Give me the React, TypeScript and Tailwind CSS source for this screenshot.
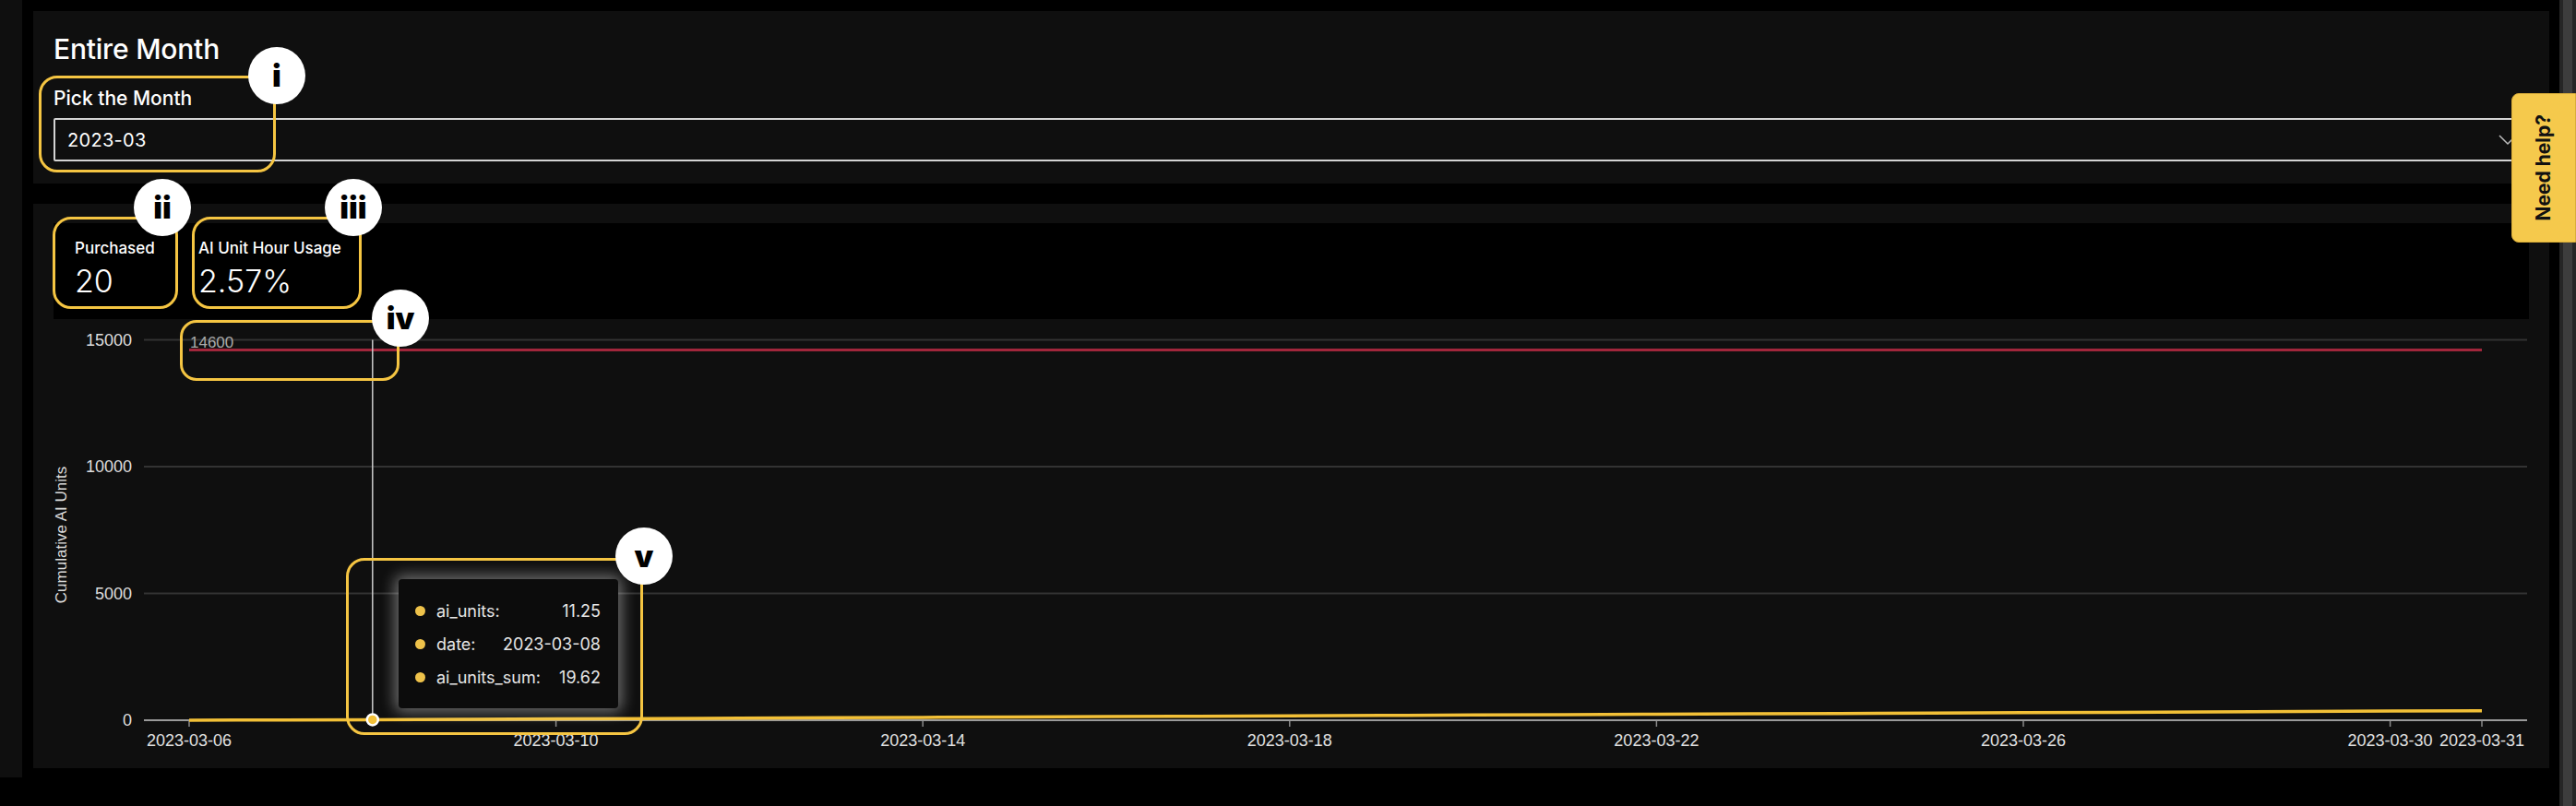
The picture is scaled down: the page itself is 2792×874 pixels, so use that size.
import React from 'react';

const xFor = (d: number) => 169 + d * 99.4;
const yFor = (v: number) => 435 - (v / 5000) * 137.5;

const sums = Array.from({ length: 26 }, (_, d) =>
  d === 0 ? 3.4 : d === 1 ? 8.37 : 19.62 + (d - 2) * 15.45
);
const tickDays = [0, 4, 8, 12, 16, 20, 24, 25];
const dateLabel = (d: number) => `2023-03-${String(6 + d).padStart(2, '0')}`;
const yTicks = [0, 5000, 10000, 15000];

const tooltipRows = [
  { label: 'ai_units:', value: '11.25' },
  { label: 'date:', value: '2023-03-08' },
  { label: 'ai_units_sum:', value: '19.62' },
];

const Chart = () => {
  const linePoints = sums.map((v, d) => `${xFor(d)},${yFor(v)}`).join(' ');
  const cursorX = xFor(2);

  return (
    <div className="relative h-[487px] w-[2727px]">
      <svg width="2727" height="487" className="block font-['Liberation_Sans',Arial,sans-serif]">
        {yTicks.map((v) => (
          <g key={v}>
            {v !== 0 && (
              <line x1="120" x2="2703" y1={yFor(v)} y2={yFor(v)} stroke="#333333" strokeWidth="2" />
            )}
            <text x="107" y={yFor(v) + 6} textAnchor="end" fontSize="18" fill="#dddddd">
              {v}
            </text>
          </g>
        ))}

        <text
          x="0"
          y="0"
          transform="translate(36 234) rotate(-90)"
          textAnchor="middle"
          fontSize="17"
          fill="#dddddd"
        >
          Cumulative AI Units
        </text>

        {/* purchased limit */}
        <line x1={xFor(0)} x2={xFor(25)} y1={yFor(14600)} y2={yFor(14600)} stroke="#a1263b" strokeWidth="3" />
        <text x={xFor(0) + 1} y={yFor(15000) + 8} fontSize="17" fill="#aaaaaa">
          14600
        </text>

        {/* x axis */}
        <line x1="120" x2="2703" y1="435" y2="435" stroke="#9a9a9a" strokeWidth="2" />
        {tickDays.map((d) => (
          <g key={d}>
            <line x1={xFor(d)} x2={xFor(d)} y1="436" y2="442" stroke="#8a8a8a" strokeWidth="1.5" />
            <text x={xFor(d)} y="463" textAnchor="middle" fontSize="18" fill="#e0e0e0">
              {dateLabel(d)}
            </text>
          </g>
        ))}

        <line x1={cursorX} x2={cursorX} y1={yFor(15000)} y2="435" stroke="#cccccc" strokeWidth="1.5" />

        <polyline points={linePoints} fill="none" stroke="#f2c037" strokeWidth="3.5" strokeLinejoin="round" />

        <circle cx={cursorX} cy={yFor(sums[2])} r="6" fill="#f2c037" stroke="#ffffff" strokeWidth="2.5" />
      </svg>

      <div className="absolute left-[396px] top-[282px] w-[238px] rounded-[4px] bg-[#0c0c0c] py-[16px] pl-[18px] pr-[19px] shadow-[0_0_16px_4px_rgba(255,255,255,0.4)]">
        {tooltipRows.map((row) => (
          <div key={row.label} className="flex h-[36px] items-center text-[18px] text-[#e6e6e6]">
            <span className="mr-[12px] h-[11px] w-[11px] rounded-full bg-[#eec24a]" />
            <span>{row.label}</span>
            <span className="ml-auto">{row.value}</span>
          </div>
        ))}
      </div>
    </div>
  );
};

const Stat = ({ label, value, className }: { label: string; value: string; className: string }) => (
  <div className={className}>
    <div className="text-[17px] leading-[20px] font-medium text-white">{label}</div>
    <div className="mt-[6px] text-[34px] leading-[40px] font-light text-white">{value}</div>
  </div>
);

export default function App() {
  return (
    <div className="relative flex h-[874px] w-[2792px] overflow-hidden bg-black font-['Inter',sans-serif] text-white">
      <div className="h-[843px] w-[24px] shrink-0 bg-[#0f0f0f]" />

      <main className="ml-[12px] flex w-[2727px] shrink-0 flex-col pt-[12px]">
        <section className="h-[187px] bg-[#0f0f0f] px-[22px] pt-[23px]">
          <h1 className="text-[30px] leading-[36px] font-medium tracking-[-0.2px]">Entire Month</h1>
          <div className="mt-[24px] text-[21px] leading-[24px] font-medium">Pick the Month</div>
          <div className="mt-[9px] flex h-[47px] items-center justify-between rounded-[2px] border-2 border-[#d4d4d4] pl-[13px] pr-[11px]">
            <span className="text-[20px] tracking-[0.3px]">2023-03</span>
            <svg width="20" height="12" viewBox="0 0 20 12" fill="none" stroke="#bbbbbb" strokeWidth="1.5">
              <path d="M1 1 L10 10 L19 1" />
            </svg>
          </div>
        </section>

        <section className="mt-[22px] h-[612px] bg-[#0f0f0f] pt-[21px]">
          <div className="mx-[22px] flex h-[104px] bg-black pl-[23px] pt-[17px]">
            <Stat label="Purchased" value="20" className="w-[134px]" />
            <Stat label="AI Unit Hour Usage" value="2.57%" className="w-[200px]" />
          </div>
          <Chart />
        </section>
      </main>

      <div className="ml-[11px] flex h-full w-[18px] shrink-0 justify-center bg-[#262626]">
        <div className="w-[10px] bg-[#3d3d3d]" />
      </div>

      {/* annotation markers */}
      <div className="pointer-events-none absolute inset-0">
        <div className="absolute left-[42px] top-[82px] h-[105px] w-[257px] rounded-[20px] border-[3px] border-[#f5c542]" />
        <div className="absolute left-[57px] top-[235px] h-[100px] w-[136px] rounded-[20px] border-[3px] border-[#f5c542]" />
        <div className="absolute left-[208px] top-[235px] h-[100px] w-[184px] rounded-[20px] border-[3px] border-[#f5c542]" />
        <div className="absolute left-[195px] top-[347px] h-[66px] w-[238px] rounded-[18px] border-[3px] border-[#f5c542]" />
        <div className="absolute left-[375px] top-[605px] h-[192px] w-[322px] rounded-[20px] border-[3px] border-[#f5c542]" />

        <div className="absolute left-[269px] top-[51px] flex h-[62px] w-[62px] items-center justify-center rounded-full bg-white text-[33px] leading-none font-black text-black">i</div>
        <div className="absolute left-[145px] top-[194px] flex h-[62px] w-[62px] items-center justify-center rounded-full bg-white text-[33px] leading-none font-black text-black">ii</div>
        <div className="absolute left-[352px] top-[194px] flex h-[62px] w-[62px] items-center justify-center rounded-full bg-white text-[33px] leading-none font-black text-black">iii</div>
        <div className="absolute left-[403px] top-[314px] flex h-[62px] w-[62px] items-center justify-center rounded-full bg-white text-[33px] leading-none font-black text-black">iv</div>
        <div className="absolute left-[667px] top-[572px] flex h-[62px] w-[62px] items-center justify-center rounded-full bg-white text-[33px] leading-none font-black text-black">v</div>
      </div>

      <button className="fixed right-0 top-[101px] flex h-[162px] w-[70px] items-center justify-center rounded-l-[8px] border border-[#d9ad3a] bg-[#f5c94c]">
        <span className="rotate-180 text-[21px] font-bold text-[#111111] [writing-mode:vertical-rl]">Need help?</span>
      </button>
    </div>
  );
}
